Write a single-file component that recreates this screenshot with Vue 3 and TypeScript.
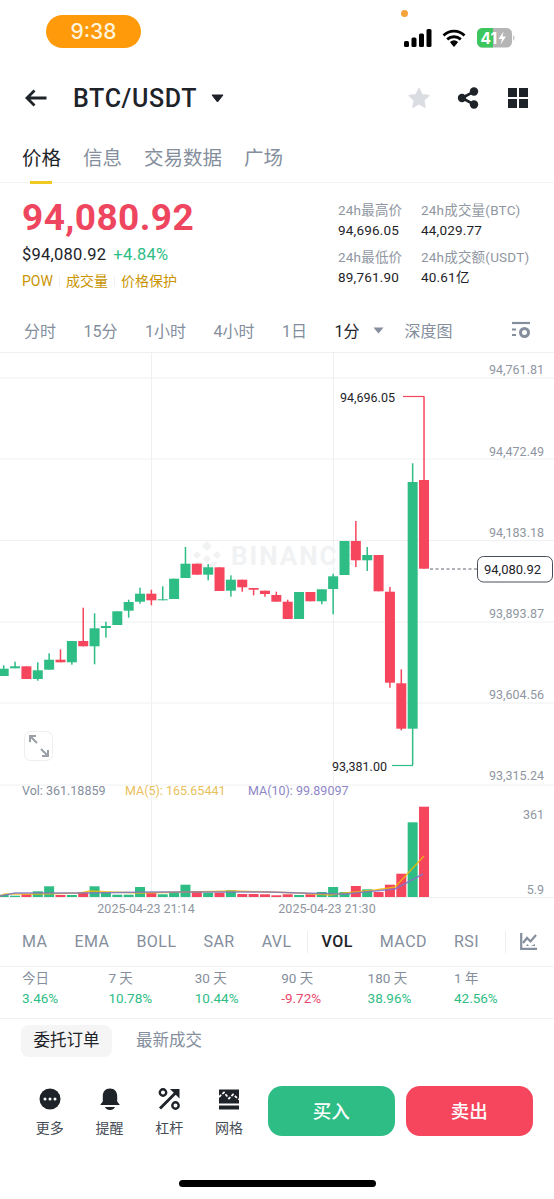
<script setup lang="ts">
type C = [number, number, number | null, number | null, 'g' | 'r']
const raw: C[] = [
  [667.7,675,664.3,null,'g'],[665.3,667.3,660.7,null,'g'],[665.3,678,null,null,'r'],[669.3,678,661.3,679.7,'g'],
  [658.7,668.7,652.3,null,'g'],[658.7,661.3,648.3,null,'r'],[640,661.3,null,663.7,'g'],[640,645.3,606.7,null,'r'],
  [627.3,645.3,612.3,663.3,'g'],[625,627,620.7,636.7,'g'],[610.3,624,null,null,'g'],[601,609.7,598.7,616.7,'g'],
  [592.7,600.7,586.7,602.7,'g'],[592.7,599.3,588.7,604.3,'r'],[598.3,599.3,585.3,null,'g'],[577.7,598,null,null,'g'],
  [562.7,577,546,null,'g'],[562.7,573.7,null,null,'r'],[566.3,573.7,563,579.3,'g'],[566.3,590,null,null,'r'],
  [578.7,589.7,574.3,595.7,'g'],[578.7,586.3,null,590.7,'r'],[587,588.7,null,594.3,'r'],[589.7,593,null,595.7,'r'],
  [594,600.7,590.7,null,'r'],[600.7,618,598.7,null,'r'],[591,618,null,null,'g'],[591,600.3,null,null,'r'],
  [588.3,600.3,null,603.3,'g'],[575.3,588,572.7,613.3,'g'],[540,574,null,null,'g'],[540,559.3,520,566,'r'],
  [554,559.3,546,570,'g'],[554,590.3,null,null,'r'],[590.7,681.7,586,686.7,'r'],[682.3,727.7,668.3,729.3,'r'],
  [481,727.7,462.3,764,'g'],[479,567.7,395.3,null,'r']
]
const volH = [2.3,1.3,2.7,5.7,10.7,2,2,4.7,10.7,4.7,2.3,2.3,10,4.3,2.7,5,12.3,6,4.3,4.3,6.7,3,3,2.7,1.7,2.7,2,2.7,5,10,5,11,7.7,5,12.3,23.3,74.7,90.3]
const xAt = (i: number) => 3.7 + i * 11.36
const candles = raw.map((c, i) => ({
  x: xAt(i), top: c[0], h: c[1] - c[0], wt: c[2] ?? c[0], wb: c[3] ?? c[1], color: c[4] === 'g' ? '#2EBD85' : '#F6465D', vol: volH[i]
}))
const hLines = [377, 458, 539.5, 621, 702, 784]
const axis = [['94,761.81',373],['94,472.49',455],['94,183.18',536],['93,893.87',617],['93,604.56',698],['93,315.24',779]] as [string, number][]
const intervals = ['分时','15分','1小时','4小时','1日']
const perf = [['今日','3.46%',true],['7 天','10.78%',true],['30 天','10.44%',true],['90 天','-9.72%',false],['180 天','38.96%',true],['1 年','42.56%',true]] as [string,string,boolean][]
const ind1 = ['MA','EMA','BOLL','SAR','AVL']
const ind2 = ['MACD','RSI']
</script>

<template>
  <div class="page">
    <header class="status">
      <div class="pill">9:38</div>
      <i class="dot"></i>
      <div class="status-icons">
        <svg width="28" height="18" viewBox="0 0 28 18"><rect x="0" y="12" width="5" height="6" rx="1.5"/><rect x="7.5" y="8.5" width="5" height="9.5" rx="1.5"/><rect x="15" y="4.5" width="5" height="13.5" rx="1.5"/><rect x="22.5" y="0" width="5" height="18" rx="1.5"/></svg>
        <svg width="24" height="18" viewBox="0 0 24 18"><path d="M1.5 6.5a15 15 0 0 1 21 0M5.2 10.4a10 10 0 0 1 13.6 0M8.8 14a5 5 0 0 1 6.4 0" fill="none" stroke="#000" stroke-width="2.8"/><path d="M12 18l-3-3.6a4.5 4.5 0 0 1 6 0z"/></svg>
        <svg width="38" height="20" viewBox="0 0 38 20"><rect x="0" y="0" width="35" height="19.5" rx="5.5" fill="#B5B5B5"/><path d="M5.5 0H16v19.5H5.5A5.5 5.5 0 0 1 0 14V5.500A5.500 5.500 0 0 1 5.500 0z" fill="#3CC75E"/><text x="3.500" y="15.500" class="batt">41</text><path d="M26.500 3.500l-5 7.500h3.500l-1.500 5.500 5.500-8h-3.500z" fill="#fff"/><path d="M36 7v6a3 3 0 0 0 1.500-3 3 3 0 0 0-1.500-3z" fill="#C8C8C8"/></svg>
      </div>
    </header>

    <nav class="nav">
      <svg class="back" width="24" height="20" viewBox="0 0 24 20"><path d="M22.500 10H3M10.500 2.500L3 10l7.500 7.500" fill="none" stroke="#1E2329" stroke-width="2.800"/></svg>
      <span class="pair">BTC/USDT</span>
      <svg class="caret" width="13" height="9" viewBox="0 0 13 9"><path d="M1 1h11L6.500 8z" fill="#1E2329" stroke="#1E2329" stroke-linejoin="round"/></svg>
      <div class="nav-icons">
        <svg width="24" height="24" viewBox="0 0 24 24"><path d="M12 2.500l2.900 6.300 6.800.8-5 4.700 1.300 6.800-6-3.400-6 3.400 1.300-6.800-5-4.700 6.800-.8z" fill="#DADDE2" stroke="#DADDE2" stroke-width="1.500" stroke-linejoin="round"/></svg>
        <svg width="24" height="24" viewBox="0 0 24 24"><path d="M18 5.500L6 12l12 6.500" fill="none" stroke="#1E2329" stroke-width="2.600"/><circle cx="18" cy="5.500" r="4.200" fill="#1E2329"/><circle cx="18" cy="18.500" r="4.200" fill="#1E2329"/><circle cx="6" cy="12" r="4.200" fill="#1E2329"/></svg>
        <svg class="apps" width="22" height="22" viewBox="0 0 22 22"><path d="M1 1h9v9H1zM12 1h9v9h-9zM1 12h9v9H1zM12 12h9v9h-9z" fill="#1E2329"/></svg>
      </div>
    </nav>

    <div class="tabs">
      <span class="tab active">价格<i class="ink"></i></span>
      <span class="tab">信息</span>
      <span class="tab">交易数据</span>
      <span class="tab">广场</span>
    </div>

    <section class="summary">
      <div class="left">
        <div class="price">94,080.92</div>
        <div class="sub"><span class="usd">$94,080.92</span><span class="chg">+4.84%</span></div>
        <div class="tags"><span>POW</span><i></i><span>成交量</span><i></i><span>价格保护</span></div>
      </div>
      <div class="stats">
        <div class="stat"><span>24h最高价</span><b>94,696.05</b></div>
        <div class="stat"><span>24h成交量(BTC)</span><b>44,029.77</b></div>
        <div class="stat"><span>24h最低价</span><b>89,761.90</b></div>
        <div class="stat"><span>24h成交额(USDT)</span><b>40.61亿</b></div>
      </div>
    </section>

    <div class="intervals">
      <span v-for="t in intervals" :key="t">{{ t }}</span>
      <span class="on">1分</span>
      <svg class="mini" width="11" height="7" viewBox="0 0 11 7"><path d="M0.500 0.500h10L5.500 6.500z" fill="#848E9C"/></svg>
      <span class="depth">深度图</span>
      <svg class="cfg" width="20" height="18" viewBox="0 0 20 18"><path d="M1 2h18" stroke="#848E9C" stroke-width="2.200"/><path d="M1 8.500h4M1 14h4" stroke="#848E9C" stroke-width="2.200"/><circle cx="13.500" cy="11.500" r="4" fill="none" stroke="#848E9C" stroke-width="3"/></svg>
    </div>

    <svg class="chart" width="554" height="564" viewBox="0 352 554 564">
      <line v-for="y in hLines" :key="y" x1="0" x2="554" :y1="y" :y2="y" stroke="#EFF0F2"/>
      <line x1="0" x2="554" y1="896.500" y2="896.500" stroke="#EFF0F2"/>
      <line x1="151.500" x2="151.500" y1="352" y2="896" stroke="#EFF0F2"/>
      <line x1="333.500" x2="333.500" y1="352" y2="896" stroke="#EFF0F2"/>

      <g fill="#F1F2F3">
        <path d="M207 540l5 5-5 5-5-5zM197 550l4 4-4 4-4-4zM217 550l4 4-4 4-4-4zM207 554l4 4-4 4-4-4zM207 566l5-5 6 0-11 11-11-11 6 0z"/>
        <text x="231" y="564" class="mark">BINANCE</text>
      </g>

      <g v-for="(c, i) in candles" :key="i">
        <rect :x="c.x - 0.750" :y="c.wt" width="1.500" :height="c.wb - c.wt" :fill="c.color"/>
        <rect :x="c.x - 5" :y="c.top" width="10" :height="c.h" :fill="c.color"/>
        <rect :x="c.x - 5" :y="896 - c.vol" width="10" :height="c.vol" :fill="c.color"/>
      </g>

      <polyline points="0,895 5,893 40,893 80,892 90,890 110,891 140,892 235,890 300,892 330,894 345,892 375,889 395,886 410,870 424,855" fill="none" stroke="#F0B90B" stroke-width="1.500" opacity=".85"/>
      <polyline points="0,895 15,892 90,892 150,891 200,891 270,891 300,892 345,893 395,888 410,880 423,873" fill="none" stroke="#7F74C4" stroke-width="1.500" opacity=".85"/>

      <text v-for="a in axis" :key="a[0]" x="544" :y="a[1]" text-anchor="end" class="ax">{{ a[0] }}</text>

      <text x="340" y="400.500" class="hi">94,696.05</text>
      <path d="M403 395.500h21" stroke="#F6465D" stroke-width="1.200" fill="none"/>
      <text x="332" y="769.500" class="hi">93,381.00</text>
      <path d="M392 764.500h21" stroke="#2EBD85" stroke-width="1.200" fill="none"/>

      <path d="M430 568h47" stroke="#5F6670" stroke-dasharray="3 2.500" fill="none"/>
      <rect x="477.500" y="555.500" width="75" height="25.500" rx="6" fill="#fff" stroke="#474D57"/>
      <text x="484" y="573" class="tag">94,080.92</text>

      <rect x="24.500" y="730.500" width="28" height="29" rx="6" fill="#fff" stroke="#EDEEF0"/>
      <path d="M37 742l-6-6M30 741v-6h6M41 748l6 6M48 749v6h-6" fill="none" stroke="#9A9FA6" stroke-width="2"/>

      <text x="22" y="794" class="vt">Vol: 361.18859</text>
      <text x="125" y="794" class="vt y">MA(5): 165.65441</text>
      <text x="248" y="794" class="vt p">MA(10): 99.89097</text>
      <text x="544" y="818" text-anchor="end" class="ax">361</text>
      <text x="544" y="893" text-anchor="end" class="ax">5.9</text>
      <text x="146" y="912" text-anchor="middle" class="ax">2025-04-23 21:14</text>
      <text x="327" y="912" text-anchor="middle" class="ax">2025-04-23 21:30</text>
    </svg>

    <div class="indicators">
      <span v-for="t in ind1" :key="t">{{ t }}</span>
      <i class="sep"></i>
      <span class="on">VOL</span>
      <span v-for="t in ind2" :key="t">{{ t }}</span>
      <i class="sep last"></i>
      <svg width="17" height="17" viewBox="0 0 17 17"><path d="M1.200 0v15.800H17" fill="none" stroke="#848E9C" stroke-width="2.200"/><path d="M3 10l4-5 3.500 3.500L16 2" fill="none" stroke="#848E9C" stroke-width="2.200"/><path d="M6 13h3l-1.500-2zM11 13h4v-2z" fill="#848E9C"/></svg>
    </div>

    <div class="perf">
      <div v-for="p in perf" :key="p[0]" class="perf-item">
        <span>{{ p[0] }}</span>
        <b :class="p[2] ? 'up' : 'down'">{{ p[1] }}</b>
      </div>
    </div>

    <div class="orders">
      <span class="chip">委托订单</span>
      <span class="plain">最新成交</span>
    </div>

    <footer class="actions">
      <div class="act">
        <svg width="24" height="24" viewBox="0 0 24 24"><circle cx="12" cy="12" r="10.500" fill="#1E2329"/><circle cx="7" cy="12" r="1.500" fill="#fff"/><circle cx="12" cy="12" r="1.500" fill="#fff"/><circle cx="17" cy="12" r="1.500" fill="#fff"/></svg>
        <span>更多</span>
      </div>
      <div class="act">
        <svg width="24" height="24" viewBox="0 0 24 24"><path d="M12 1.500c-4.800 0-7.200 3.500-7.200 7.500v5.500L2.200 18h19.600l-2.600-3.500V9c0-4-2.400-7.500-7.200-7.500z" fill="#1E2329"/><path d="M7 20h10c-.8 2-2.600 3-5 3s-4.200-1-5-3z" fill="#1E2329"/></svg>
        <span>提醒</span>
      </div>
      <div class="act">
        <svg width="24" height="24" viewBox="0 0 24 24"><path d="M3 21.500L20 4.500" stroke="#1E2329" stroke-width="2.800" fill="none"/><path d="M13 2h9.500v9.500z" fill="#1E2329"/><circle cx="6" cy="5.500" r="3.200" fill="none" stroke="#1E2329" stroke-width="2.400"/><circle cx="18.500" cy="18.500" r="3.200" fill="none" stroke="#1E2329" stroke-width="2.400"/></svg>
        <span>杠杆</span>
      </div>
      <div class="act">
        <svg width="24" height="24" viewBox="0 0 24 24"><path d="M2 2.500h20v14H2z" fill="#1E2329"/><path d="M2 18.500h20v4H2z" fill="#1E2329"/><path d="M2 10l5-4.500 5 6 4-4 6 5" fill="none" stroke="#fff" stroke-width="1.700" stroke-dasharray="3 1.500"/></svg>
        <span>网格</span>
      </div>
      <div class="btns">
        <button class="btn buy">买入</button>
        <button class="btn sell">卖出</button>
      </div>
    </footer>
    <i class="home"></i>
  </div>
</template>

<style scoped>
.page {
  position: relative;
  width: 554px;
  height: 1199px;
  overflow: hidden;
  background: #fff;
  display: flex;
  flex-direction: column;
  color: #1E2329;
  font-family: Roboto, "Noto Sans CJK SC", sans-serif;
}
i { display: block; font-style: normal; }
b { font-weight: 400; }
.status { position: relative; height: 64px; flex: none; display: flex; justify-content: space-between; align-items: flex-start; }
.pill { margin: 15px 0 0 46px; width: 95px; height: 33px; border-radius: 17px; background: #FF9A0A; color: #FFF3DC; font: 500 21px/33px Inter, sans-serif; text-align: center; }
.dot { position: absolute; left: 401px; top: 10px; width: 7px; height: 7px; border-radius: 50%; background: #F5A33B; }
.status-icons { margin: 28px 39px 0 0; display: flex; align-items: center; gap: 10px; }
.status-icons svg:last-child { margin-left: 1px; }
.batt { font: 700 15.5px Inter, sans-serif; fill: #fff; }
.nav { height: 68px; flex: none; display: flex; align-items: center; padding: 0 25px 0 24px; }
.pair { margin-left: 25px; font-size: 25px; font-weight: 500; letter-spacing: .65px; line-height: 1; }
.caret { margin-left: 14px; }
.nav-icons { margin-left: auto; display: flex; align-items: center; gap: 25px; }
.apps { margin-left: 2px; }
.tabs { position: relative; height: 51px; flex: none; display: flex; gap: 22px; padding: 3px 0 0 22px; align-items: center; border-bottom: 1px solid #F3F4F5; font-size: 19.500px; color: #848E9C; box-sizing: border-box; }
.tab { position: relative; line-height: 26px; }
.tab.active { color: #1E2329; }
.ink { position: absolute; left: 8px; width: 22px; height: 3px; bottom: -12px; background: #F0C921; }
.summary { height: 131px; flex: none; display: flex; justify-content: space-between; padding: 13px 0 0 22px; box-sizing: border-box; }
.price { font-size: 37px; font-weight: 700; line-height: 44px; color: #EF4660; letter-spacing: .4px; }
.sub { margin-top: 5px; display: flex; gap: 7px; font-size: 16.500px; line-height: 20px; letter-spacing: .25px; }
.chg { color: #2EBD85; }
.tags { margin-top: 6px; display: flex; align-items: center; gap: 6px; font-size: 14px; line-height: 20px; color: #C99400; }
.tags i { width: 1px; height: 10px; background: #EEF0F2; }
.stats { margin: 4px 0 0; width: 216px; display: grid; grid-template-columns: 83px 1fr; row-gap: 7px; align-content: start; font-size: 13.500px; line-height: 20px; letter-spacing: .2px; }
.stat { display: flex; flex-direction: column; white-space: nowrap; }
.stat span { color: #8F96A1; }
.stat b { color: #1E2329; }
.intervals { height: 32px; flex: none; display: flex; align-items: center; gap: 27.500px; padding: 0 0 6px 24px; font-size: 16px; color: #848E9C; border-bottom: 1px solid #EFF0F2; box-sizing: content-box; }
.intervals .on { color: #1E2329; }
.mini { margin-left: -14px; }
.depth { margin-left: -7px; }
.cfg { margin-left: 31px; }
.chart { display: block; flex: none; }
.ax { font-size: 12.500px; fill: #8F96A1; font-family: Roboto, sans-serif; }
.hi { font-size: 12.500px; fill: #1E2329; font-family: Roboto, sans-serif; }
.tag { font-size: 13px; fill: #1E2329; font-family: Roboto, sans-serif; }
.vt { font-size: 12.500px; fill: #848E9C; font-family: Roboto, sans-serif; }
.vt.y { fill: #E8C15A; }
.vt.p { fill: #8E86C6; }
.mark { font-size: 26px; font-weight: 700; letter-spacing: 2px; font-family: Roboto, sans-serif; }
.indicators { height: 49px; flex: none; display: flex; align-items: center; gap: 27px; padding-left: 22px; font-size: 16px; letter-spacing: .45px; color: #848E9C; border-bottom: 1px solid #F1F2F3; }
.indicators .on { color: #1E2329; font-weight: 500; margin-left: -13px; }
.sep { width: 1px; height: 22px; background: #ECEEF0; margin-left: -12px; }
.sep.last { margin-left: -1px; }
.indicators svg { margin-left: -13px; }
.perf { height: 52px; flex: none; display: grid; grid-template-columns: repeat(6, 86.400px); padding: 1px 0 0 22px; box-sizing: border-box; border-bottom: 1px solid #F1F2F3; font-size: 13.500px; line-height: 20px; }
.perf-item { display: flex; flex-direction: column; white-space: nowrap; }
.perf-item span { color: #848E9C; }
.up { color: #2EBD85; }
.down { color: #E8466A; }
.orders { height: 44px; flex: none; display: flex; align-items: flex-start; padding: 6px 0 0 21px; box-sizing: border-box; font-size: 16.500px; }
.chip { width: 91px; height: 32px; line-height: 32px; border-radius: 8px; background: #F5F5F5; text-align: center; }
.plain { margin-left: 24px; line-height: 32px; color: #848E9C; }
.actions { flex: 1; display: flex; align-items: flex-start; padding-top: 24px; box-sizing: border-box; }
.act { width: 59.700px; display: flex; flex-direction: column; align-items: center; gap: 7px; font-size: 14px; line-height: 20px; color: #474D57; }
.act:first-child { margin-left: 20px; }
.act svg { display: block; }
.btns { margin: -1px 0 0 9px; display: flex; gap: 11px; }
.btn { width: 127px; height: 50px; padding: 0 0 3px; border: 0; border-radius: 14px; color: #fff; font: 500 18.500px "Noto Sans CJK SC", sans-serif; }
.buy { background: #2EBD85; }
.sell { background: #F6465D; }
.home { position: absolute; left: 179px; bottom: 12px; width: 197px; height: 7px; border-radius: 4px; background: #000; }
</style>

<style>
html, body { background: #fff; }
</style>
